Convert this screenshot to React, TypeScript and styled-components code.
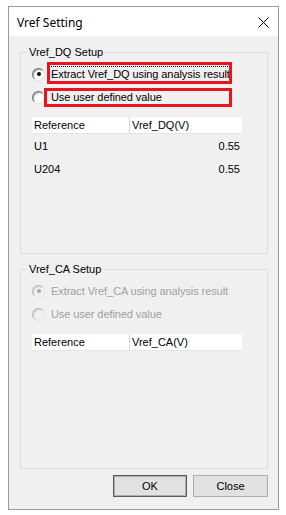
import React from "react";
import styled, { createGlobalStyle, css } from "styled-components";

const Global = createGlobalStyle`
  html, body { margin: 0; padding: 0; background: #ffffff; }
  body { font-family: Tahoma, "Liberation Sans", Arial, sans-serif; font-size: 11px; color: #000; }
`;

const Window = styled.div`
  margin: 6px 0 0 8px;
  width: 271px;
  height: 504px;
  box-sizing: border-box;
  border: 1px solid #9a9a9a;
  background: #f0f0f0;
  display: flex;
  flex-direction: column;
`;

const TitleBar = styled.div`
  height: 29px;
  flex: none;
  background: #ffffff;
  display: flex;
  align-items: center;
  justify-content: space-between;
  padding: 0 9px 0 8px;
`;

const Title = styled.span`
  font-family: "Noto Sans", "Open Sans", sans-serif;
  font-size: 12px;
  color: #000;
  margin-top: 1px;
`;

const CloseX = styled.svg`
  width: 11px;
  height: 11px;
  display: block;
  margin-top: 1px;
`;

const Body = styled.div`
  flex: 1;
  display: flex;
  flex-direction: column;
  padding: 10px 10px 0 11px;
`;

const Group = styled.fieldset<{ $h: number }>`
  position: relative;
  margin: 0;
  height: ${(p) => p.$h}px;
  box-sizing: border-box;
  border: 1px solid #dcdcdc;
  padding: 4px 10px 0 11px;
  min-width: 0;
`;

const Legend = styled.legend`
  padding: 0 3px 0 2px;
  margin-left: -5px;
  line-height: 13px;
  color: #000;
`;

const RadioList = styled.div`
  display: flex;
  flex-direction: column;
  gap: 1px;
`;

const RadioRow = styled.div<{ $disabled?: boolean }>`
  height: 22px;
  display: flex;
  align-items: center;
  gap: 5px;
  color: ${(p) => (p.$disabled ? "#a0a0a0" : "#000")};
`;

const RadioCircle = styled.span<{ $checked?: boolean; $disabled?: boolean }>`
  width: 13px;
  height: 13px;
  box-sizing: border-box;
  border-radius: 50%;
  border: 1px solid;
  border-color: ${(p) =>
    p.$disabled ? "#b8b8b8 #e6e6e6 #e6e6e6 #b8b8b8" : "#6e6e6e #dedede #dedede #6e6e6e"};
  background: ${(p) => (p.$disabled ? "#f0f0f0" : "#ffffff")};
  box-shadow: inset 1px 1px 0 ${(p) => (p.$disabled ? "#d0d0d0" : "#a8a8a8")};
  display: flex;
  align-items: center;
  justify-content: center;
  flex: none;
  &::after {
    content: "";
    width: 4px;
    height: 4px;
    border-radius: 50%;
    background: ${(p) => (p.$disabled ? "#a8a8a8" : "#000")};
    display: ${(p) => (p.$checked ? "block" : "none")};
  }
`;

const RadioLabel = styled.span<{ $focus?: boolean }>`
  line-height: 14px;
  padding: 0 1px;
  white-space: nowrap;
  letter-spacing: -0.08px;
  ${(p) =>
    p.$focus &&
    css`
      outline: 1px dotted #000;
      outline-offset: 0px;
    `}
`;

const Table = styled.div`
  margin-top: 9px;
  width: 210px;
  display: grid;
  grid-template-columns: 98px 112px;
`;

const HeadCell = styled.div<{ $sep?: boolean }>`
  height: 17px;
  box-sizing: border-box;
  background: #ffffff;
  border-bottom: 1px solid #e5e5e5;
  border-right: ${(p) => (p.$sep ? "1px solid #d5d5d5" : "none")};
  padding-left: 2px;
  display: flex;
  align-items: center;
`;

const Cell = styled.div<{ $right?: boolean }>`
  height: 23px;
  display: flex;
  align-items: center;
  padding: 0 2px;
  justify-content: ${(p) => (p.$right ? "flex-end" : "flex-start")};
`;

const Highlight = styled.div<{ $l: number; $t: number; $w: number; $h: number }>`
  position: absolute;
  left: ${(p) => p.$l}px;
  top: ${(p) => p.$t}px;
  width: ${(p) => p.$w}px;
  height: ${(p) => p.$h}px;
  box-sizing: border-box;
  border: 3px solid #e8141f;
  pointer-events: none;
`;

const Spacer = styled.div<{ $h: number }>`
  height: ${(p) => p.$h}px;
  flex: none;
`;

const ButtonRow = styled.div`
  display: flex;
  justify-content: flex-end;
  gap: 6px;
`;

const Button = styled.button<{ $default?: boolean; $w: number }>`
  width: ${(p) => p.$w}px;
  height: 22px;
  margin: 0;
  padding: 0;
  font-family: Tahoma, "Liberation Sans", Arial, sans-serif;
  font-size: 11px;
  color: #000;
  background: #e1e1e1;
  border: 1px solid ${(p) => (p.$default ? "#5a5a5a" : "#adadad")};
  box-shadow: ${(p) => (p.$default ? "inset 0 0 0 1px #adadad" : "none")};
`;

const dq = [
  { ref: "U1", v: "0.55" },
  { ref: "U204", v: "0.55" },
];

export default function App() {
  return (
    <>
      <Global />
      <Window>
        <TitleBar>
          <Title>Vref Setting</Title>
          <CloseX viewBox="0 0 11 11">
            <path d="M0.5 0.5 L10.5 10.5 M10.5 0.5 L0.5 10.5" stroke="#000" strokeWidth="1" />
          </CloseX>
        </TitleBar>
        <Body>
          <Group $h={208}>
            <Legend>Vref_DQ Setup</Legend>
            <RadioList>
              <RadioRow>
                <RadioCircle $checked />
                <RadioLabel $focus>Extract Vref_DQ using analysis result</RadioLabel>
              </RadioRow>
              <RadioRow>
                <RadioCircle />
                <RadioLabel>Use user defined value</RadioLabel>
              </RadioRow>
            </RadioList>
            <Table>
              <HeadCell $sep>Reference</HeadCell>
              <HeadCell>Vref_DQ(V)</HeadCell>
              {dq.map((r) => (
                <React.Fragment key={r.ref}>
                  <Cell>{r.ref}</Cell>
                  <Cell $right>{r.v}</Cell>
                </React.Fragment>
              ))}
            </Table>
            <Highlight $l={26} $t={3} $w={185} $h={22} />
            <Highlight $l={23} $t={29} $w={188} $h={19} />
          </Group>
          <Spacer $h={9} />
          <Group $h={206}>
            <Legend>Vref_CA Setup</Legend>
            <RadioList>
              <RadioRow $disabled>
                <RadioCircle $checked $disabled />
                <RadioLabel>Extract Vref_CA using analysis result</RadioLabel>
              </RadioRow>
              <RadioRow $disabled>
                <RadioCircle $disabled />
                <RadioLabel>Use user defined value</RadioLabel>
              </RadioRow>
            </RadioList>
            <Table>
              <HeadCell $sep>Reference</HeadCell>
              <HeadCell>Vref_CA(V)</HeadCell>
            </Table>
          </Group>
          <Spacer $h={6} />
          <ButtonRow>
            <Button $default $w={74}>OK</Button>
            <Button $w={75}>Close</Button>
          </ButtonRow>
        </Body>
      </Window>
    </>
  );
}
